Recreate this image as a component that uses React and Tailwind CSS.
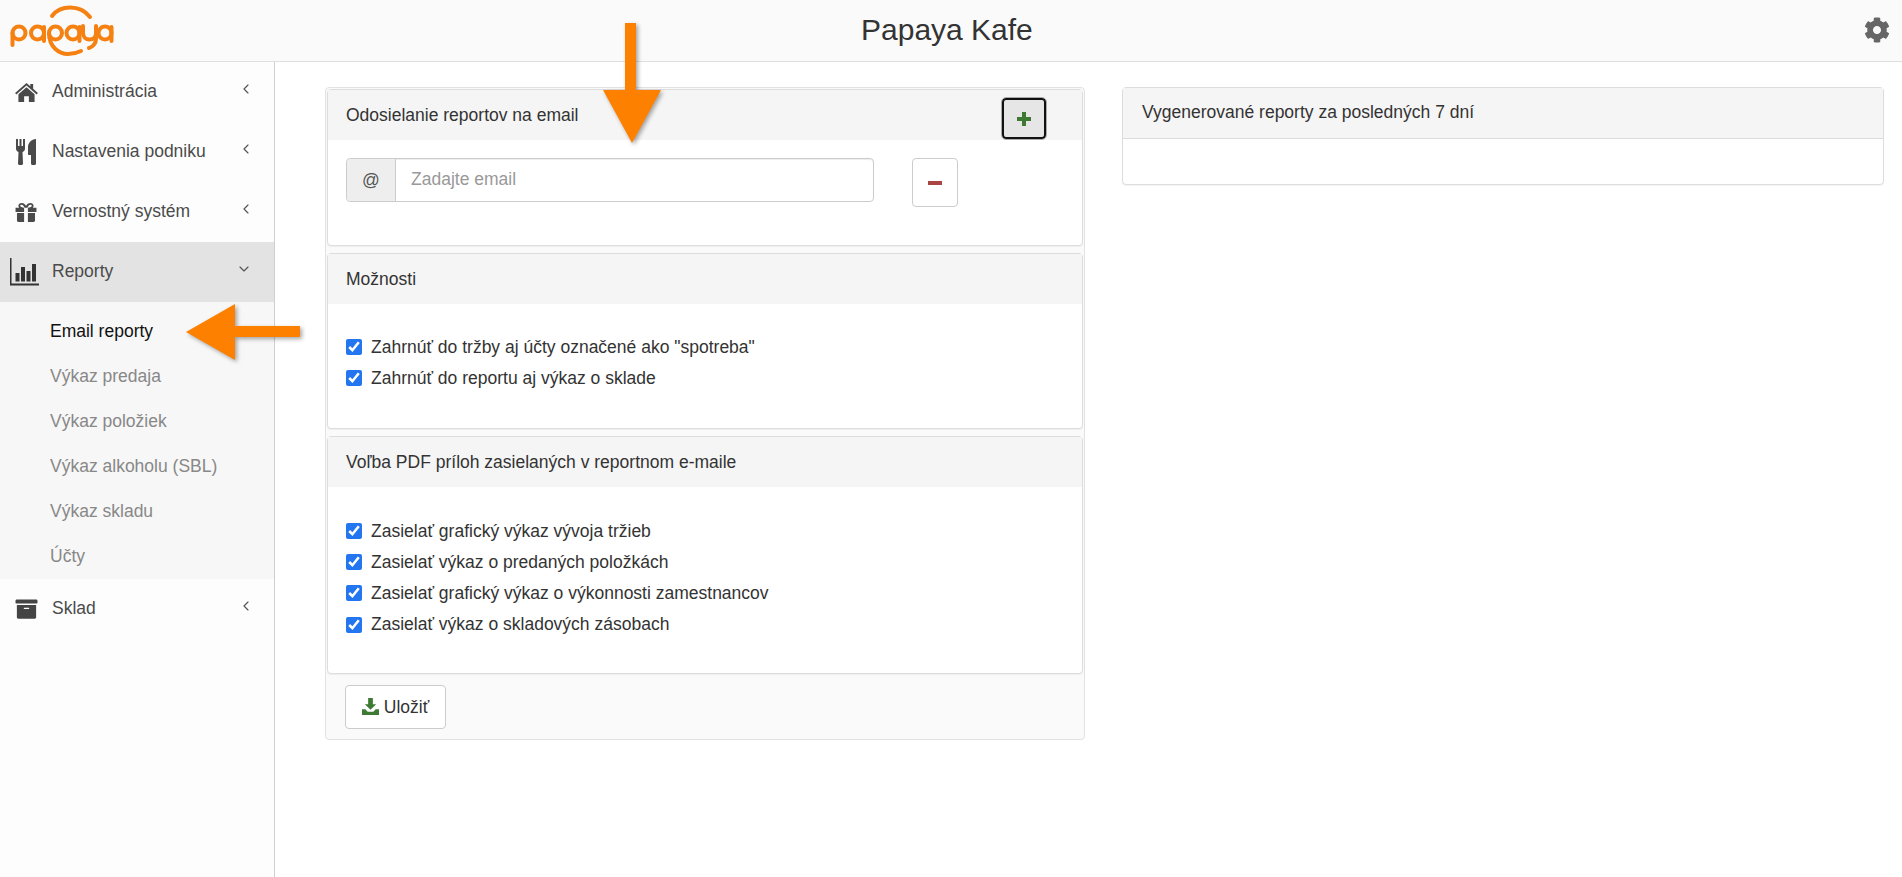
import React from "react";
import { ChevronLeft, ChevronDown } from "lucide-react";
import { FaArchive, FaCog } from "react-icons/fa";

function HomeIcon({ className }) {
  return (
    <svg viewBox="0 0 24 20" className={className} fill="currentColor">
      <path d="M12 0l4 3.500V1h3v5.100l5 4.400-1.300 1.500L12 2.700 1.300 12 0 10.500z" />
      <path d="M12 4.500l8.500 7.300V20H14.500v-6h-5v6H3.500v-8.200z" />
    </svg>
  );
}

function CutleryIcon({ className }) {
  return (
    <svg viewBox="0 0 20 26" className={className} fill="currentColor">
      <path d="M0 0h2v7h1.500V0h2v7H7V0h2v9.500c0 1.800-1 3-2.500 3.500l.5 11.500c0 .9-.6 1.500-1.500 1.500h-2C2.600 26 2 25.400 2 24.500L2.500 13C1 12.500 0 11.300 0 9.500z" />
      <path d="M20 0v24.500c0 .9-.6 1.500-1.500 1.500h-2c-.9 0-1.500-.6-1.500-1.500V16h-2c-.6 0-1-.4-1-1V8c0-4 3.500-8 8-8z" />
    </svg>
  );
}

function GiftIcon({ className }) {
  return (
    <svg viewBox="0 0 22 20" className={className} fill="currentColor">
      <path fillRule="evenodd" d="M6.500 0C8.500 0 10 1.300 11 3c1-1.700 2.500-3 4.500-3C17.500 0 19 1.200 19 2.900c0 .8-.3 1.500-.8 2.100H22v4.500H13V5h-4v4.500H0V5h3.800C3.300 4.400 3 3.700 3 2.900 3 1.200 4.500 0 6.500 0zM6.300 1.800c-.8 0-1.400.5-1.400 1.200 0 1.100 1.600 1.900 4.600 2C9 3.300 7.700 1.800 6.300 1.800zm9.400 0c-1.400 0-2.700 1.500-3.200 3.200 3-.1 4.600-.9 4.600-2 0-.7-.6-1.200-1.400-1.200z" />
      <path d="M1.500 10.500H9V20H3c-.8 0-1.500-.7-1.500-1.500zM13 10.500h7.500v8c0 .8-.7 1.500-1.500 1.500h-6z" />
    </svg>
  );
}

function StatsIcon({ className }) {
  return (
    <svg viewBox="0 0 29 28" className={className} fill="currentColor">
      <path d="M0 0h1.500v25.500H29v2H0z" />
      <rect x="5.500" y="15" width="4" height="8.500" />
      <rect x="11" y="9" width="4" height="14.500" />
      <rect x="16.500" y="13" width="4" height="10.500" />
      <rect x="22" y="6" width="4" height="17.500" />
    </svg>
  );
}

function SaveIcon({ className }) {
  return (
    <svg viewBox="0 0 18 18" className={className} fill="currentColor">
      <path d="M6.500 0h5v6.500H15L9 12.500 3 6.500h3.500z" />
      <path d="M0 12h3.500L6 14.500h6L14.500 12H18v6H0z" />
    </svg>
  );
}

function PlusIcon({ className }) {
  return (
    <svg viewBox="0 0 14 14" className={className} fill="currentColor">
      <path d="M5 0h4v5h5v4H9v5H5V9H0V5h5z" />
    </svg>
  );
}

function PapayaLogo() {
  return (
    <svg viewBox="0 0 120 60" className="w-[120px] h-[60px]" fill="none" stroke="#f58113" strokeWidth="4" strokeLinecap="round">
      <circle cx="19" cy="32" r="6.500" />
      <path d="M12.500 32v12" />
      <circle cx="37.500" cy="32" r="6.500" />
      <path d="M44 26v14" />
      <circle cx="55.500" cy="32" r="6.500" />
      <path d="M49 32c0 14 10 21 19 21 5 0 9-1 13-3" />
      <path d="M52 15c8-11 28-12 38 1" />
      <circle cx="73" cy="32" r="6.500" />
      <path d="M79.500 26v14" />
      <path d="M83 25v7c0 4 3 6.500 6.500 6.500s6.500-2.500 6.500-6.500v-7M96 32v6c0 4-3 8-7 9" />
      <circle cx="105" cy="32" r="6.500" />
      <path d="M111.500 26v14" />
    </svg>
  );
}

const NAV_TOP = [
  { label: "Administrácia", icon: <HomeIcon className="w-[23px] h-[19px]" /> },
  { label: "Nastavenia podniku", icon: <CutleryIcon className="w-[20px] h-[26px]" /> },
  { label: "Vernostný systém", icon: <GiftIcon className="w-[22px] h-[19px]" /> },
];
const SUB = ["Email reporty", "Výkaz predaja", "Výkaz položiek", "Výkaz alkoholu (SBL)", "Výkaz skladu", "Účty"];

function NavItem({ label, icon, active }) {
  return (
    <div className={`flex items-center h-[60px] ${active ? "bg-[#e3e3e3]" : ""}`}>
      <span className="w-[52px] flex justify-center text-[#4a4a4a]">{icon}</span>
      <span className="text-[#4b4b4b] text-[17.5px] pb-[2px]">{label}</span>
      <span className={`ml-auto mb-[7px] text-[#555] ${active ? "mr-[22px]" : "mr-[20px]"}`}>
        {active ? <ChevronDown className="w-[16px] h-[16px]" strokeWidth={1.75} /> : <ChevronLeft className="w-[16px] h-[16px]" strokeWidth={1.75} />}
      </span>
    </div>
  );
}

function Panel({ title, bodyClass, children, action }) {
  return (
    <div className="bg-white border border-[#dddddd] rounded-[4px] shadow-[0_1px_1px_rgba(0,0,0,0.05)]">
      <div className="bg-[#f5f5f5] h-[50px] flex items-center pl-[18px] pr-[38px] text-[#333] text-[17.5px] relative">
        <span>{title}</span>
        {action}
      </div>
      <div className={bodyClass}>{children}</div>
    </div>
  );
}

function Check({ label }) {
  return (
    <label className="flex items-center h-[31.3px] text-[17.5px] text-[#333]">
      <input type="checkbox" defaultChecked className="w-[16px] h-[16px] accent-[#2376f0] mr-[9px]" />
      <span>{label}</span>
    </label>
  );
}

export default function App() {
  return (
    <div className="relative min-h-[877px] bg-white overflow-hidden font-['Liberation_Sans',Arial,sans-serif]">
      <header className="h-[62px] bg-[#fafafa] border-b border-[#dfdfdf] flex items-center relative">
        <PapayaLogo />
        <div className="absolute left-[861px] top-[10px] text-[30px] leading-[40px] text-[#333]">Papaya Kafe</div>
        <FaCog className="ml-auto mr-[12px] w-[26px] h-[26px] text-[#666] mb-[1px]" />
      </header>
      <div className="flex min-h-[815px]">
        <aside className="w-[275px] shrink-0 bg-[#fdfdfd] border-r border-[#cfcfcf]">
          {NAV_TOP.map((n) => <NavItem key={n.label} {...n} />)}
          <NavItem label="Reporty" active icon={<StatsIcon className="w-[29px] h-[28px] text-[#333] mr-[3px]" />} />
          <div className="bg-[#f7f7f7] pt-[7px]">
            {SUB.map((s, i) => (
              <div key={s} className={`h-[45px] flex items-center pl-[50px] text-[17.5px] ${i === 0 ? "text-[#111]" : "text-[#888]"}`}>{s}</div>
            ))}
          </div>
          <NavItem label="Sklad" icon={<FaArchive className="w-[23px] h-[22px] text-[#444]" />} />
        </aside>
        <main className="flex-1 flex items-start gap-[37px] pl-[50px] pt-[25px] pr-[18px]">
          <div className="w-[760px] shrink-0 bg-[#fafafa] border border-[#e2e2e2] rounded-[4px] p-[1px]">
            <div className="flex flex-col gap-[7px]">
              <Panel
                title="Odosielanie reportov na email"
                bodyClass="h-[105px] pl-[18px] pt-[18px] flex items-start"
                action={
                  <button className="absolute left-[674px] top-[8px] w-[44px] h-[41px] flex items-center justify-center bg-[#e6e6e6] border-2 border-[#111] rounded-[4px] outline outline-1 outline-[#aaa]">
                    <PlusIcon className="w-[14px] h-[14px] text-[#3f7a35]" />
                  </button>
                }
              >
                <div className="flex w-[528px] h-[44px] border border-[#cccccc] rounded-[4px] shadow-[inset_0_1px_1px_rgba(0,0,0,0.075)]">
                  <span className="w-[49px] bg-[#eeeeee] border-r border-[#cccccc] flex items-center justify-center text-[#555] text-[17.5px] rounded-l-[4px]">@</span>
                  <input placeholder="Zadajte email" className="flex-1 px-[15px] pb-[2px] text-[17.5px] outline-none placeholder:text-[#999] bg-transparent" />
                </div>
                <button className="ml-[38px] w-[46px] h-[49px] bg-white border border-[#cccccc] rounded-[4px] flex items-center justify-center">
                  <span className="block w-[14px] h-[4px] bg-[#a94442]" />
                </button>
              </Panel>
              <Panel title="Možnosti" bodyClass="h-[124px] pl-[18px] pt-[27px]">
                <Check label={'Zahrnúť do tržby aj účty označené ako "spotreba"'} />
                <Check label="Zahrnúť do reportu aj výkaz o sklade" />
              </Panel>
              <Panel title="Voľba PDF príloh zasielaných v reportnom e-maile" bodyClass="h-[186px] pl-[18px] pt-[28px]">
                <Check label="Zasielať grafický výkaz vývoja tržieb" />
                <Check label="Zasielať výkaz o predaných položkách" />
                <Check label="Zasielať grafický výkaz o výkonnosti zamestnancov" />
                <Check label="Zasielať výkaz o skladových zásobach" />
              </Panel>
            </div>
            <div className="pl-[18px] pt-[11px] pb-[9px]">
              <button className="h-[44px] w-[101px] bg-white border border-[#cccccc] rounded-[4px] flex items-center justify-center gap-[5px] text-[17.5px] text-[#333]">
                <SaveIcon className="w-[17px] h-[17px] text-[#3f7a35] mb-[2px]" />
                Uložiť
              </button>
            </div>
          </div>
          <div className="flex-1 bg-white border border-[#dddddd] rounded-[4px] shadow-[0_1px_1px_rgba(0,0,0,0.05)]">
            <div className="h-[51px] bg-[#f5f5f5] border-b border-[#dddddd] flex items-center pl-[19px] pb-[2px] text-[17.5px] text-[#333]">Vygenerované reporty za posledných 7 dní</div>
            <div className="h-[45px]" />
          </div>
        </main>
      </div>
      {/* annotation arrows over the screenshot */}
      <svg className="absolute left-[180px] top-[298px] w-[125px] h-[70px] drop-shadow-[2px_2px_2px_rgba(0,0,0,0.35)]" viewBox="0 0 125 70">
        <path d="M6 34 55 6v22h65v11H55v23z" fill="#fe8000" />
      </svg>
      <svg className="absolute left-[598px] top-[18px] w-[70px] h-[130px] drop-shadow-[2px_2px_2px_rgba(0,0,0,0.35)]" viewBox="0 0 70 130">
        <path d="M27 5h11v67h25L34 125 5 72h22z" fill="#fe8000" />
      </svg>
    </div>
  );
}
